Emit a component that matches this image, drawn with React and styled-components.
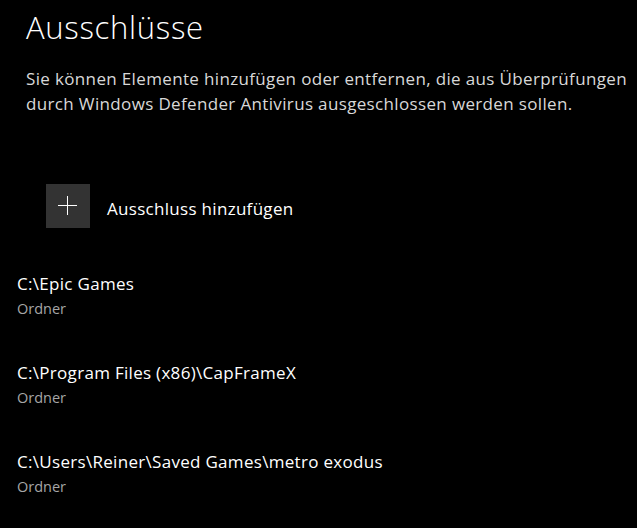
import React from "react";
import styled, { createGlobalStyle } from "styled-components";

const Global = createGlobalStyle`
  html, body { margin: 0; padding: 0; background: #000; }
  body { font-family: "Open Sans", "Noto Sans", sans-serif; -webkit-font-smoothing: antialiased; }
`;

const Page = styled.div`
  width: 637px;
  height: 528px;
  background: #000;
  overflow: hidden;
  display: flex;
  flex-direction: column;
`;

const Header = styled.header`
  padding: 7px 0 0 26px;
  display: flex;
  flex-direction: column;
  gap: 19px;
`;

const Title = styled.h1`
  margin: 0;
  font-size: 31px;
  font-weight: 300;
  line-height: 40px;
  letter-spacing: 0.7px;
  color: #fff;
`;

const Description = styled.p`
  margin: 0;
  font-size: 17px;
  line-height: 25px;
  letter-spacing: 0.35px;
  color: #d8d8d8;
  width: 606px;
`;

const AddButton = styled.button`
  margin: 68px 0 0 46px;
  padding: 0;
  border: 0;
  background: transparent;
  display: flex;
  align-items: center;
  gap: 17px;
  cursor: pointer;
  font-family: inherit;
  align-self: flex-start;
`;

const IconBox = styled.span`
  width: 44px;
  height: 44px;
  background: #333;
  display: flex;
  align-items: center;
  justify-content: center;
`;

const AddLabel = styled.span`
  font-size: 17px;
  line-height: 24px;
  letter-spacing: 0.3px;
  padding-top: 5px;
  color: #fff;
`;

const List = styled.ul`
  list-style: none;
  margin: 44px 0 0 0;
  padding: 0 0 0 17px;
  display: flex;
  flex-direction: column;
  gap: 40px;
`;

const Item = styled.li`
  display: flex;
  flex-direction: column;
`;

const Path = styled.span`
  font-size: 17px;
  line-height: 24px;
  letter-spacing: 0.3px;
  color: #fff;
`;

const Kind = styled.span`
  font-size: 14.5px;
  line-height: 24px;
  padding-top: 1px;
  color: #a6a6a6;
`;

const items = [
  "C:\\Epic Games",
  "C:\\Program Files (x86)\\CapFrameX",
  "C:\\Users\\Reiner\\Saved Games\\metro exodus",
];

export default function App() {
  return (
    <Page>
      <Global />
      <Header>
        <Title>Ausschlüsse</Title>
        <Description>
          Sie können Elemente hinzufügen oder entfernen, die aus Überprüfungen
          durch Windows Defender Antivirus ausgeschlossen werden sollen.
        </Description>
      </Header>
      <AddButton>
        <IconBox>
          <svg width="20" height="20" viewBox="0 0 20 20">
            <path d="M9.5 0V19M0 9.5H19" stroke="#fff" strokeWidth="1" />
          </svg>
        </IconBox>
        <AddLabel>Ausschluss hinzufügen</AddLabel>
      </AddButton>
      <List>
        {items.map((p) => (
          <Item key={p}>
            <Path>{p}</Path>
            <Kind>Ordner</Kind>
          </Item>
        ))}
      </List>
    </Page>
  );
}
